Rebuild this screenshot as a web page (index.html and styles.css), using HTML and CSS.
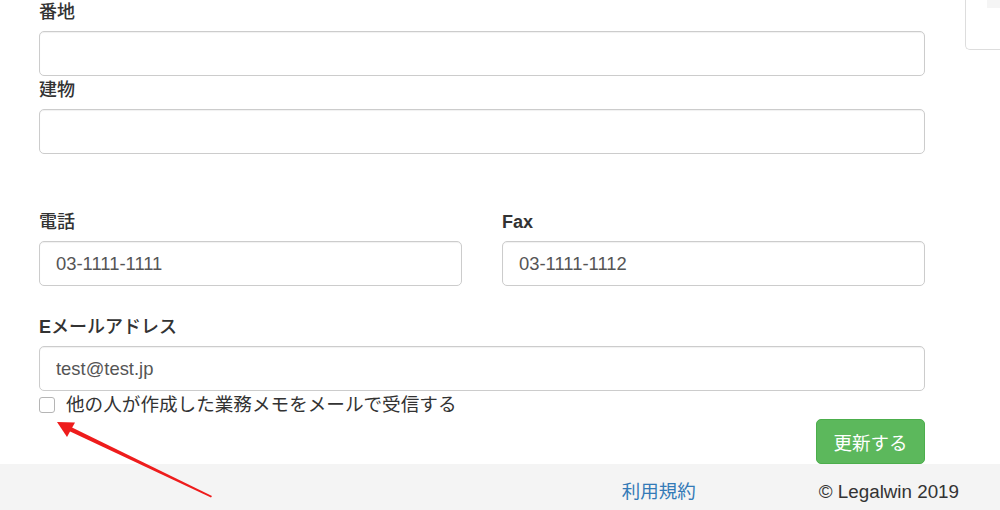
FILE: index.html
```html
<!DOCTYPE html>
<html lang="ja">
<head>
<meta charset="utf-8">
<title>ユーザー設定</title>
<link rel="stylesheet" href="styles.css">
</head>
<body>
<div class="page">
  <div class="layout">
    <main class="main">
      <div class="group">
        <label class="label">番地</label>
        <input class="input" type="text" value="">
      </div>
      <div class="group">
        <label class="label">建物</label>
        <input class="input" type="text" value="">
      </div>
      <div class="row spaced">
        <div class="group col">
          <label class="label">電話</label>
          <input class="input" type="text" value="03-1111-1111">
        </div>
        <div class="group col">
          <label class="label"><b>Fax</b></label>
          <input class="input" type="text" value="03-1111-1112">
        </div>
      </div>
      <div class="group email">
        <label class="label"><b>E</b>メールアドレス</label>
        <input class="input" type="text" value="test@test.jp">
      </div>
      <label class="check">
        <input class="box" type="checkbox">
        <span class="check-text">他の人が作成した業務メモをメールで受信する</span>
      </label>
      <div class="actions">
        <button class="btn" type="button">更新する</button>
      </div>
    </main>
    <aside class="aside">
      <div class="panel"><div class="panel-head"></div></div>
    </aside>
  </div>
  <footer class="footer">
    <a class="footer-link" href="#">利用規約</a>
    <span class="copy">© Legalwin 2019</span>
  </footer>
  <svg class="arrow" width="1000" height="510" viewBox="0 0 1000 510">
    <polygon points="212,496 211,497.5 68,430.5 70,426.5" fill="#ee1c1c"/>
    <polygon points="57,422 75,422.5 67,437" fill="#ee1c1c"/>
  </svg>
</div>
</body>
</html>
```

FILE: styles.css
```css
html, body {
  margin: 0;
  padding: 0;
  background: #fff;
}
body {
  font-family: "Liberation Sans", "Noto Sans CJK JP", Arial, sans-serif;
  color: #333;
  overflow: hidden;
}
.page {
  position: relative;
  width: 1000px;
  height: 510px;
  overflow: hidden;
}
.layout {
  display: flex;
  gap: 40px;
  padding-left: 39px;
}
.main {
  width: 886px;
  flex-shrink: 0;
  margin-top: -2px;
  display: flex;
  flex-direction: column;
}
.group {
  display: flex;
  flex-direction: column;
}
.label {
  font-size: 18px;
  font-weight: 500;
  line-height: 28px;
  margin-bottom: 5px;
  color: #333;
}
.label b {
  font-weight: bold;
}
.input {
  box-sizing: border-box;
  height: 45px;
  width: 100%;
  margin: 0;
  padding: 0 16px;
  font-family: "Liberation Sans", "Noto Sans CJK JP", Arial, sans-serif;
  font-size: 18.4px;
  color: #555;
  background: #fff;
  border: 1px solid #ccc;
  border-radius: 5px;
  box-shadow: inset 0 1px 1px rgba(0,0,0,0.06);
  outline: none;
}
.row {
  display: flex;
  gap: 40px;
}
.col {
  flex: 1;
}
.spaced {
  margin-top: 54px;
}
.email {
  margin-top: 27px;
}
.check {
  display: flex;
  align-items: center;
  height: 28px;
  gap: 11px;
  cursor: pointer;
}
.box {
  appearance: none;
  -webkit-appearance: none;
  box-sizing: border-box;
  width: 16px;
  height: 16px;
  margin: 0;
  border: 1px solid #b5b5b5;
  border-radius: 3px;
  background: #fff;
}
.check-text {
  font-size: 18.6px;
  line-height: 28px;
  color: #333;
}
.actions {
  display: flex;
  justify-content: flex-end;
}
.btn {
  box-sizing: border-box;
  height: 45px;
  width: 109px;
  padding: 0 16px;
  font-family: "Liberation Sans", "Noto Sans CJK JP", Arial, sans-serif;
  font-size: 18.5px;
  color: #fff;
  background: #5cb85c;
  border: 1px solid #4cae4c;
  border-radius: 5px;
}
.aside {
  flex: 1;
}
.panel {
  box-sizing: border-box;
  margin-top: -10px;
  height: 60px;
  border: 1px solid #ddd;
  border-right: none;
  border-radius: 0 0 0 5px;
  padding-left: 21px;
}
.panel-head {
  height: 17px;
  background: #f5f5f5;
}
.footer {
  position: absolute;
  left: 0;
  right: 0;
  top: 464px;
  height: 46px;
  background: #f4f4f4;
  display: flex;
  justify-content: flex-end;
  align-items: flex-start;
  padding-right: 41px;
  padding-top: 14px;
  box-sizing: border-box;
  gap: 123px;
  font-size: 18.5px;
  line-height: 27px;
}
.footer-link {
  color: #337ab7;
  text-decoration: none;
}
.copy {
  color: #333;
  font-size: 18.8px;
}
.arrow {
  position: absolute;
  left: 0;
  top: 0;
  pointer-events: none;
}
```
